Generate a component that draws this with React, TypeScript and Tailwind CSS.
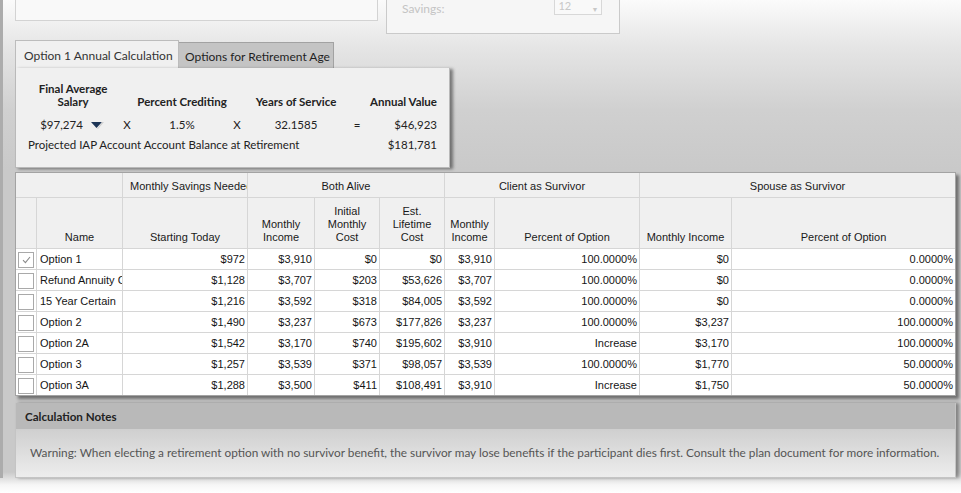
import React from "react"

type Row = {
  checked: boolean
  name: string
  today: string
  income: string
  initCost: string
  lifeCost: string
  clientIncome: string
  clientPct: string
  spouseIncome: string
  spousePct: string
}

const rows: Row[] = [
  { checked: true, name: "Option 1", today: "$972", income: "$3,910", initCost: "$0", lifeCost: "$0", clientIncome: "$3,910", clientPct: "100.0000%", spouseIncome: "$0", spousePct: "0.0000%" },
  { checked: false, name: "Refund Annuity Certain", today: "$1,128", income: "$3,707", initCost: "$203", lifeCost: "$53,626", clientIncome: "$3,707", clientPct: "100.0000%", spouseIncome: "$0", spousePct: "0.0000%" },
  { checked: false, name: "15 Year Certain", today: "$1,216", income: "$3,592", initCost: "$318", lifeCost: "$84,005", clientIncome: "$3,592", clientPct: "100.0000%", spouseIncome: "$0", spousePct: "0.0000%" },
  { checked: false, name: "Option 2", today: "$1,490", income: "$3,237", initCost: "$673", lifeCost: "$177,826", clientIncome: "$3,237", clientPct: "100.0000%", spouseIncome: "$3,237", spousePct: "100.0000%" },
  { checked: false, name: "Option 2A", today: "$1,542", income: "$3,170", initCost: "$740", lifeCost: "$195,602", clientIncome: "$3,910", clientPct: "Increase", spouseIncome: "$3,170", spousePct: "100.0000%" },
  { checked: false, name: "Option 3", today: "$1,257", income: "$3,539", initCost: "$371", lifeCost: "$98,057", clientIncome: "$3,539", clientPct: "100.0000%", spouseIncome: "$1,770", spousePct: "50.0000%" },
  { checked: false, name: "Option 3A", today: "$1,288", income: "$3,500", initCost: "$411", lifeCost: "$108,491", clientIncome: "$3,910", clientPct: "Increase", spouseIncome: "$1,750", spousePct: "50.0000%" },
]

const ui = "font-['Lato','Liberation_Sans',sans-serif]"
const gridFont = "font-['Liberation_Sans',Arial,sans-serif]"

// header cells share the light grey face
const hd = "bg-[#f0f0f0] border-r border-b border-[#d6d6d6] text-[11px] text-[#1a1a1a] leading-[13px] text-center"

function Check({ on }: { on: boolean }) {
  return (
    <div className="w-[16px] h-[16px] border border-[#a9a9a9] bg-white flex items-center justify-center">
      {on && (
        <svg width="9" height="8" viewBox="0 0 9 8">
          <path d="M1 4.2 L3.4 6.6 L8 1" fill="none" stroke="#8a8a8a" strokeWidth="1.1" />
        </svg>
      )}
    </div>
  )
}

function OptionsGrid() {
  return (
    <div className={`w-[941px] border border-[#a3a3a3] bg-white shadow-[3px_3px_3px_rgba(0,0,0,0.45)] ${gridFont}`}>
      <div className="grid grid-cols-[21px_86px_125px_67px_65px_65px_50px_145px_92px_223px]">
        {/* group headers */}
        <div className={`${hd} col-span-2 h-[25px]`} />
        <div className={`${hd} h-[25px] flex items-center pt-[2px] pl-[7px] whitespace-nowrap overflow-hidden`}>Monthly Savings Needed</div>
        <div className={`${hd} col-span-3 h-[25px] flex items-center justify-center pt-[2px]`}>Both Alive</div>
        <div className={`${hd} col-span-2 h-[25px] flex items-center justify-center pt-[2px]`}>Client as Survivor</div>
        <div className={`${hd} col-span-2 h-[25px] flex items-center justify-center pt-[2px] border-r-0`}>Spouse as Survivor</div>

        {/* column headers */}
        {[
          [""],
          ["Name"],
          ["Starting Today"],
          ["Monthly", "Income"],
          ["Initial", "Monthly", "Cost"],
          ["Est.", "Lifetime", "Cost"],
          ["Monthly", "Income"],
          ["Percent of Option"],
          ["Monthly Income"],
          ["Percent of Option"],
        ].map((lines, i) => (
          <div
            key={i}
            className={`${hd} h-[51px] flex flex-col justify-end pb-[4px] ${i === 9 ? "border-r-0" : ""}`}
          >
            {lines.map((l) => (
              <span key={l}>{l}</span>
            ))}
          </div>
        ))}

        {rows.map((r, ri) => {
          const last = ri === rows.length - 1
          const cell = `border-r border-[#d6d6d6] text-[11px] text-[#151515] flex items-center pt-[1px] whitespace-nowrap overflow-hidden ${last ? "h-[20px]" : "h-[21px] border-b"}`
          const num = `${cell} justify-end pr-[2px]`
          return (
            <React.Fragment key={r.name}>
              <div className={`${cell} pl-[2px] pt-0`}>
                <Check on={r.checked} />
              </div>
              <div className={`${cell} pl-[3px]`}>{r.name}</div>
              <div className={num}>{r.today}</div>
              <div className={num}>{r.income}</div>
              <div className={num}>{r.initCost}</div>
              <div className={num}>{r.lifeCost}</div>
              <div className={num}>{r.clientIncome}</div>
              <div className={num}>{r.clientPct}</div>
              <div className={num}>{r.spouseIncome}</div>
              <div className={`${num} border-r-0`}>{r.spousePct}</div>
            </React.Fragment>
          )
        })}
      </div>
    </div>
  )
}

function AnnualCalc() {
  return (
    <div className={`w-[435px] h-[100px] bg-[#f0f0f0] border border-t-0 border-[#b9b9b9] shadow-[3px_1px_3px_rgba(0,0,0,0.45)] pl-[12px] pt-[14px] text-[11.5px] text-[#222] ${ui}`}>
      <div className="flex items-end font-bold leading-[13px]">
        <div className="w-[90px] text-center">Final Average<br />Salary</div>
        <div className="w-[18px]" />
        <div className="w-[92px] text-center">Percent Crediting</div>
        <div className="w-[18px]" />
        <div className="w-[100px] text-center">Years of Service</div>
        <div className="w-[22px]" />
        <div className="w-[69px] text-right">Annual Value</div>
      </div>
      <div className="flex items-center h-[18px] mt-[8px]">
        <div className="w-[90px] flex items-center justify-center gap-[8px] pr-[2px]">
          <span>$97,274</span>
          <svg width="13" height="7" viewBox="0 0 13 7">
            <path d="M0 0 H11 L5.5 6 Z" fill="#1d3557" />
            <path d="M11 0 H13 L7 7 H6 Z" fill="#cfcfcf" />
          </svg>
        </div>
        <div className="w-[18px] text-center">X</div>
        <div className="w-[92px] text-center">1.5%</div>
        <div className="w-[18px] text-center">X</div>
        <div className="w-[100px] text-center">32.1585</div>
        <div className="w-[22px] text-center">=</div>
        <div className="w-[69px] text-right">$46,923</div>
      </div>
      <div className="flex items-center h-[18px] mt-[2px]">
        <div className="w-[340px]">Projected IAP Account Account Balance at Retirement</div>
        <div className="w-[69px] text-right">$181,781</div>
      </div>
    </div>
  )
}

export default function App() {
  return (
    <div className="w-[961px] h-[493px] overflow-hidden bg-[linear-gradient(to_bottom,#fbfbfb_0px,#e6e6e6_45px,#d0d0d0_110px,#c9c9c9_170px,#c9c9c9_472px,#f6f6f6_485px,#ffffff_493px)]">
      <div className="h-[478px] border-l-[3px] border-[#acacac] pl-[12px] flex flex-col">
        {/* cut-off filter boxes at the top */}
        <div className={`flex items-start gap-[8px] h-[34px] shrink-0 ${ui}`}>
          <div className="w-[363px] h-[21px] border border-t-0 border-[#d3d3d3] bg-[#f9f9f9]" />
          <div className="w-[234px] h-[34px] border border-t-0 border-[#cacaca] bg-[#f6f6f6] flex items-start pl-[15px]">
            <span className="text-[12px] text-[#c4c4c4] leading-[18px]">Savings:</span>
            <div className="ml-[110px] w-[48px] h-[15px] border border-t-0 border-[#d8d8d8] bg-[#f9f9f9] flex items-start justify-between px-[3px] text-[11px] leading-[11px] text-[#c8c8c8]">
              <span>12</span>
              <span className="text-[7px] mt-[4px]">▼</span>
            </div>
          </div>
        </div>

        {/* tabs */}
        <div className={`flex items-end mt-[6px] text-[12px] shrink-0 ${ui}`}>
          <div className="w-[164px] h-[28px] bg-[#f0f0f0] border border-b-0 border-[#bcbcbc] flex items-center pt-[3px] pl-[8px] text-[#333]">
            Option 1 Annual Calculation
          </div>
          <div className="w-[155px] h-[26px] bg-[#c4c4c4] border border-l-0 border-b-0 border-[#a2a2a2] flex items-center pt-[2px] pl-[6px] text-[#1f1f1f]">
            Options for Retirement Age
          </div>
        </div>

        <AnnualCalc />

        <div className="mt-[4px] shrink-0">
          <OptionsGrid />
        </div>

        {/* notes */}
        <div className={`mt-[7px] w-[941px] h-[75px] shrink-0 border border-t-0 border-[#c4c4c4] shadow-[3px_0_3px_rgba(0,0,0,0.35)] ${ui}`}>
          <div className="h-[26px] bg-[#b9b9b9] flex items-center pt-[1px] pl-[9px] text-[11.6px] font-bold text-[#222]">
            Calculation Notes
          </div>
          <div className="h-[48px] bg-[linear-gradient(to_bottom,#cfcfcf,#ededed)] flex items-center pl-[14px] text-[11.8px] text-[#555]">
            Warning: When electing a retirement option with no survivor benefit, the survivor may lose benefits if the participant dies first. Consult the plan document for more information.
          </div>
        </div>
      </div>
    </div>
  )
}
